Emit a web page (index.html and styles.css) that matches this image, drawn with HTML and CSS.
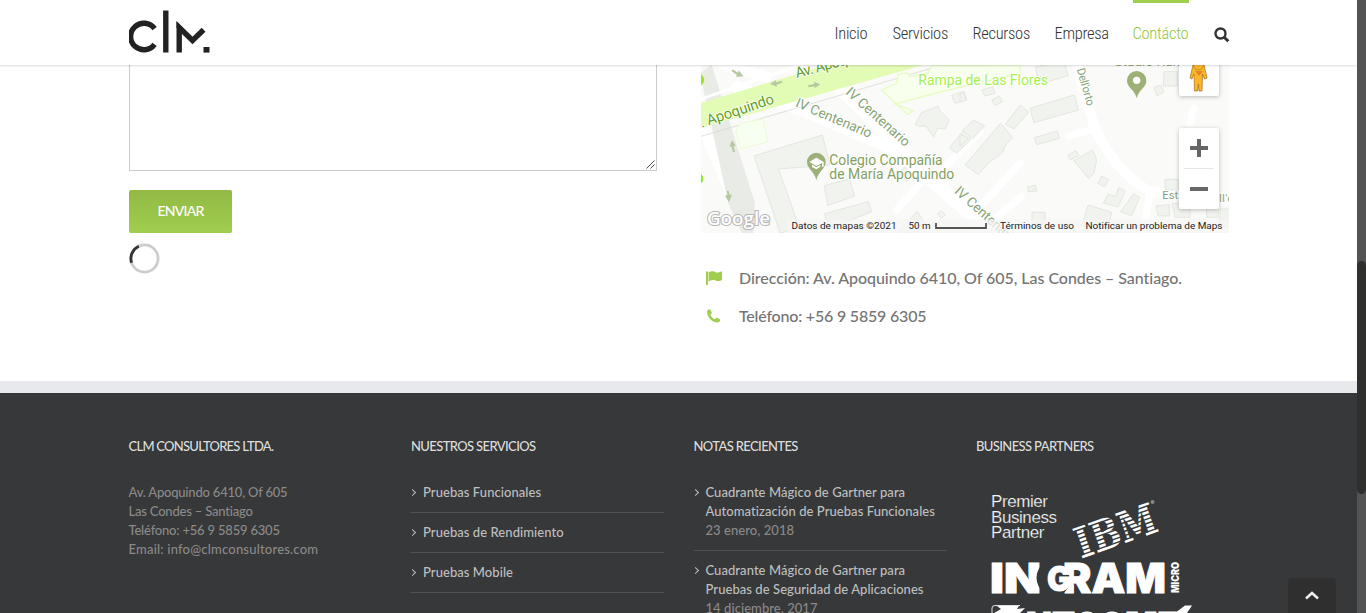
FILE: index.html
```
<!DOCTYPE html>
<html lang="es">
<head>
<meta charset="utf-8">
<title>Contácto - CLM</title>
<link rel="stylesheet" href="styles.css">
</head>
<body>
<div class="window">
<div class="page">
  <header class="header">
    <svg class="logo" width="81" height="44" viewBox="0 0 81 44" fill="none" stroke="#222" stroke-width="5.4">
      <path d="M25.600 18.600A13.300 13.300 0 1 0 25.600 34.400M36.800 0.600V42.600M50.200 42.600V17.500L63.500 30.500L74.600 19.700"/>
      <path d="M47.500 11.500V18L54 18Z" fill="#222" stroke="none"/>
      <path d="M74.500 37h6v5.600h-6z" fill="#222" stroke="none"/>
    </svg>
    <nav class="nav">
      <a class="n1">Inicio</a><a class="n2">Servicios</a><a class="n3">Recursos</a><a class="n4">Empresa</a><a class="n5 active">Contácto</a>
      <svg class="search" width="16" height="16" viewBox="0 0 16 16" fill="none" stroke="#333" stroke-width="2.400"><circle cx="6.500" cy="6.500" r="5"/><path d="M10.200 10.200L14.300 14.300" stroke-width="3"/></svg>
    </nav>
  </header>

  <main class="main">
    <section class="form">
      <div class="textarea"><svg width="9" height="9" viewBox="0 0 9 9" stroke="#555" fill="none"><path d="M0.500 8.500L8.500 .5M4.500 8.500L8.500 4.500"/></svg></div>
      <button class="send">ENVIAR</button>
      <svg class="spinner" width="31" height="31" viewBox="0 0 31 31" fill="none" stroke-width="2.800"><circle cx="15.500" cy="15.500" r="13.600" stroke="#ccc"/><path d="M2.600 19.800A13.600 13.600 0 0 1 9.800 3.200" stroke="#333"/></svg>
    </section>
    <section class="contact">
      <svg class="map" width="528" height="168" viewBox="701 65 528 168">
        <rect x="701" y="65" width="528" height="168" fill="#fafaf8"/>
        <g transform="translate(700 60) scale(.33333)">
          <g stroke="#fff" fill="none" stroke-linecap="round">
            <path d="M-10 160L150 530" stroke-width="34"/>
            <path d="M110 80L340 165L560 260L700 370L850 500" stroke-width="34"/>
            <path d="M420 90L640 300L860 500" stroke-width="34"/>
            <path d="M590 450L670 360M710 345L840 215M850 430L960 310M880 480L965 410" stroke-width="22"/>
            <path d="M70 15L200 50" stroke-width="32"/>
          </g>
          <path d="M0 40L35 15L165 430L160 530H130L85 430Z" fill="#e9ebe6"/>
          <path d="M0 130L380 15H670L0 205Z" fill="#e2fbb5"/>
          <path d="M0 118L300 15" stroke="#fff" stroke-width="9"/>
          <path d="M0 230L710 20" stroke="#d2d5ce" stroke-width="2" fill="none"/>
          <path d="M120 190L190 177L203 246L122 266L107 216Z" fill="#f7fff0" stroke="#ebfbd7" stroke-width="3"/>
          <g fill="#f1f3ef" stroke="#dfe4da" stroke-width="2.500">
            <path d="M162 288L367 225L390 315L235 327L271 426L298 505L240 519L224 470Z"/>
            <path d="M373 377L448 357L464 408L383 437ZM374 461L505 425L515 455L390 505Z"/>
            <path d="M645 193L666 157L714 138L718 150L748 181L735 208L713 204L701 231L678 198L658 199ZM755 106L792 94L800 120L765 130ZM748 263L810 190V240L770 280ZM595 515L652 453L674 490L650 520Z"/>
            <path d="M600 335L615 320L631 352L620 365ZM712 462L724 452L736 464L724 475Z"/>
          </g>
          <path d="M545 90L590 70L594 43L623 38L630 51L684 38L696 16L960 15V40L720 96L585 132L640 152L622 163Z" fill="#f8ffec" stroke="#e6fcc2" stroke-width="4"/>
          <circle cx="-4" cy="60" r="17" fill="#9be52c"/><circle cx="-7" cy="356" r="17" fill="#87ef1b"/>
          <g fill="#b4c99f">
            <path d="M98 28L114 38L116 31L130 49L108 51L111 45L95 34ZM210 72L228 60L228 67L246 62L246 68L229 74L231 80ZM324 76L343 72L341 65L361 73L344 85L344 79L326 82ZM88 261L96 241L108 258L101 257L105 275L99 277L94 259ZM75 407L83 405L80 393L86 392L89 405L96 403L87 427Z"/>
          </g>
          <g class="road" font-size="44">
            <text transform="translate(290 54) rotate(-15)" textLength="182">Av. Apoqu</text>
            <text transform="translate(5 203) rotate(-18.500)" textLength="232">. Apoquindo</text>
          </g>
          <g class="street" font-size="41">
            <text transform="translate(284 139) rotate(23)" textLength="244">IV Centenario</text>
            <text transform="translate(435 100) rotate(42)" textLength="242">IV Centenario</text>
          </g>
          <text class="poi" x="388" y="315" font-size="43" textLength="340" lengthAdjust="spacingAndGlyphs">Colegio Compañía</text>
          <text class="poi" x="388" y="357" font-size="43" textLength="375" lengthAdjust="spacingAndGlyphs">de María Apoquindo</text>
          <path d="M349 361C344 335 321 327 321 306A28 28 0 0 1 377 306C377 327 354 335 349 361Z" fill="#9db078"/>
          <path d="M328 306L349 293L371 306V320H366V309L349 318ZM336 314L349 322L361 315V320L349 328L336 321Z" fill="#fff"/>
        </g>
        <g transform="translate(960 60) scale(.33333)">
          <g stroke="#fff" fill="none" stroke-linecap="round" stroke-linejoin="round">
            <path d="M345 0L400 190C430 270 490 350 570 395L840 420" stroke-width="30"/>
            <path d="M325 228L400 208M690 190L700 145M570 395L550 520" stroke-width="22"/>
          </g>
          <g fill="#f1f3ef" stroke="#dfe4da" stroke-width="2.500">
            <path d="M226 22L310 0L325 47L238 72ZM210 145L343 105L355 150L222 188ZM136 193L180 135L206 156L162 207ZM223 233L292 213L298 235L230 254ZM65 90L98 80L105 100L75 108ZM95 120L118 108L128 124L106 137ZM0 100L12 98L18 120L0 126ZM8 211L40 180L74 197L38 236ZM0 222L24 235L0 260Z"/>
            <path d="M15 315L122 190L158 233L135 258L128 278L84 310L55 344ZM323 285L348 272L357 286L331 300ZM342 302L398 270L410 300L402 340L386 356ZM202 380L226 376L230 393L205 395ZM425 348L445 358L434 381L414 370ZM430 430L445 402L466 410L476 383L496 393L475 440ZM482 455L520 402L539 412L515 467ZM612 35H652V78H610ZM582 82L602 75L612 97L590 107ZM615 358H656V390H615ZM385 435L455 457L440 520L365 495ZM216 457H255V490H216ZM588 438L628 434V468H594ZM636 430H690V472H645ZM740 430H775V472H740ZM780 447H808V500H780Z"/>
          </g>
          <g class="street" font-size="34">
            <text transform="translate(350 28) rotate(74)" textLength="116">Dell'orto</text>
            <text x="607" y="416" textLength="48">Est</text><text x="778" y="425" font-size="31" textLength="42">ll'o</text>
            <text transform="translate(-19 397) rotate(42)" font-size="41" textLength="242">IV Centenario</text>
          </g>
          <text class="park" x="-125" y="76" font-size="42" textLength="389" lengthAdjust="spacingAndGlyphs">Rampa de Las Flores</text>
          <text class="poi" x="463" y="19" font-size="41" textLength="197">Studio Kuh</text>
          <path d="M530 115C525 88 501 84 501 62A29 29 0 0 1 559 62C559 84 535 88 530 115Z" fill="#9db078"/><circle cx="530" cy="61" r="11" fill="#fff"/>
        </g>
        <text class="google" x="707" y="225" font-size="18.500" textLength="63" lengthAdjust="spacingAndGlyphs">Google</text>
        <path d="M787 219.500H1229V233H787Z" fill="#f5f5f5" fill-opacity=".75"/>
        <g class="legal" font-size="9.500">
          <text x="791.500" y="229" textLength="105" lengthAdjust="spacingAndGlyphs">Datos de mapas ©2021</text><text x="908.500" y="229" textLength="22" lengthAdjust="spacingAndGlyphs">50 m</text>
          <text x="1000" y="229" textLength="74" lengthAdjust="spacingAndGlyphs">Términos de uso</text><text x="1085.500" y="229" textLength="137" lengthAdjust="spacingAndGlyphs">Notificar un problema de Maps</text>
        </g>
        <path d="M936 223V228H986V223" fill="none" stroke="#555" stroke-width="1.800"/>
        <g class="control"><rect x="1179" y="50" width="40" height="46" rx="2"/><rect x="1179" y="128" width="40" height="81" rx="2"/></g>
        <path d="M1184 168.500H1214" stroke="#e6e6e6"/>
        <path d="M1190 148H1208M1199 139V157M1190 189H1208" stroke="#666" stroke-width="4"/>
        <path d="M1193 65h11l3 13-2.500 1-2-5-.5 17h-3l-.5-7-1 7h-3l-.5-17-2 5-2-1Z" fill="#fbb72a" stroke="#a66c16" stroke-width=".7"/><path d="M1195 71h8l-4 5Z" fill="#e8822d"/><circle cx="1198.500" cy="65" r="5" fill="#fbb72a" stroke="#a66c16" stroke-width=".6"/>
      </svg>
      <div class="info">
        <svg width="16" height="16" viewBox="0 0 16 16" fill="#a0ce4e"><path d="M0 1.500h2V15H0zM2.500 2.500C6 .6 8 1.500 9.500 2.300S13 2.500 16 1.300V10C13 11.800 11 11 9.500 10.400S6 10 2.500 11.500Z"/></svg>
        <span class="address">Dirección: Av. Apoquindo 6410, Of 605, Las Condes – Santiago.</span>
      </div>
      <div class="info">
        <svg width="16" height="16" viewBox="0 0 16 16" fill="#a0ce4e"><path d="M1 3.500C1.400 2 3 1.200 4.300 1.400L6 5 4.300 6.800C5.200 8.800 6.800 10.300 8.800 11.300L10.800 9.600 14.300 11.500C14.300 13.300 13 14.400 11.300 14.500 6 14.400.8 9 1 3.500Z"/></svg>
        <span class="phone">Teléfono: +56 9 5859 6305</span>
      </div>
    </section>
  </main>

  <footer class="footer">
    <div class="col about"><h4 class="h1">CLM CONSULTORES LTDA.</h4>
      <p><span>Av. Apoquindo 6410, Of 605</span><br><span>Las Condes – Santiago</span><br><span>Teléfono: +56 9 5859 6305</span><br><span class="email">Email: info@clmconsultores.com</span></p>
    </div>
    <div class="col"><h4 class="h2">NUESTROS SERVICIOS</h4>
      <ul><li>Pruebas Funcionales</li><li>Pruebas de Rendimiento</li><li>Pruebas Mobile</li></ul>
    </div>
    <div class="col"><h4 class="h3">NOTAS RECIENTES</h4>
      <ul><li>Cuadrante Mágico de Gartner para<br>Automatización de Pruebas Funcionales<br><small>23 enero, 2018</small></li><li>Cuadrante Mágico de Gartner para<br>Pruebas de Seguridad de Aplicaciones<br><small>14 diciembre, 2017</small></li></ul>
    </div>
    <div class="col"><h4 class="h4">BUSINESS PARTNERS</h4>
      <svg class="partners" width="253" height="130" viewBox="976 483 253 130" fill="#fff">
        <g class="premier" font-size="17"><text x="991" y="507" textLength="57">Premier</text><text x="991" y="522.500" textLength="66">Business</text><text x="991" y="538" textLength="53.500">Partner</text></g>
        <g transform="translate(1083 558) rotate(-19.300)">
          <text class="ibm" x="-2" y="0" font-size="42.500" textLength="84" lengthAdjust="spacingAndGlyphs">IBM</text>
          <path d="M-4-3.300H86M-4-7.400H86M-4-11.500H86M-4-15.600H86M-4-19.700H86M-4-23.800H86M-4-27.900H86" stroke="#363839" stroke-width="1.400"/>
        </g>
        <circle cx="1152.500" cy="502" r="2" fill="#888"/>
        <g class="ingram">
          <text x="990" y="592.500" font-size="41" textLength="51" lengthAdjust="spacingAndGlyphs">IN</text>
          <text x="1063" y="592.500" font-size="41" textLength="103" lengthAdjust="spacingAndGlyphs">RAM</text>
          <path d="M1044 562C1034 572 1034 583 1044 594H1062C1068 591 1070 584 1069 573H1058Z" fill="#363839"/>
          <text x="1047" y="591" font-size="34" textLength="24" lengthAdjust="spacingAndGlyphs">G</text>
          <text class="micro" transform="translate(1179 593) rotate(-90)" font-size="10.500" textLength="31" lengthAdjust="spacingAndGlyphs">MICRO</text>
          <text x="1026" y="642" font-size="41" textLength="152" lengthAdjust="spacingAndGlyphs">NTCOME</text>
        </g>
        <path d="M992 613V608Q992 605.500 995 605.500H1020" fill="none" stroke="#ddd"/><path d="M994 613L1001 609 997 606H1019L1017 609 1025 608 1020 613ZM1175 613L1185 605.500H1192L1187 613Z"/>
      </svg>
    </div>
  </footer>
  <div class="totop"><svg width="14" height="9" viewBox="0 0 14 9" fill="none" stroke="#eee" stroke-width="2.500"><path d="M1 7.500L7 2L13 7.500"/></svg></div>
</div>
<div class="scrollbar"><div class="thumb"></div></div>
</div>
</body>
</html>
```
FILE: styles.css
```
body { margin: 0; background: #fff; font-family: Lato, "Noto Sans", sans-serif; font-weight: 500; font-variant-ligatures: none; }
.window { display: flex; height: 613px; overflow: hidden; }
.page { width: 1357px; height: 613px; overflow: hidden; position: relative; }
.scrollbar { width: 9px; background: #545454; padding-top: 261px; box-sizing: border-box; }
.thumb { height: 233px; border-radius: 5px; background: #2f2f2e; }

.header { position: relative; z-index: 1; box-sizing: border-box; height: 65px; padding: 0 128px 0 129px; display: flex; justify-content: space-between; background: #fff; box-shadow: 0 1px 2px rgba(0,0,0,.15); }
.logo { margin-top: 10px; }
.nav { display: flex; gap: 25px; margin-right: -.5px; font: 300 16.5px/62px "Roboto Condensed", "Liberation Sans Narrow", sans-serif; letter-spacing: -.3px; color: #333; }
.nav a { border-top: 3px solid transparent; height: 62px; white-space: nowrap; }
.nav .active { color: #92c63c; border-color: #a0ce4e; }
.n1 { width: 33px; }
.n2 { width: 55px; }
.n3 { width: 57px; }
.n4 { width: 53px; }
.n5 { width: 56px; }
.search { margin-top: 27px; }

.main { display: flex; gap: 44px; height: 316px; padding-left: 129px; }
.form { width: 528px; display: flex; flex-direction: column; align-items: flex-start; }
.textarea { box-sizing: border-box; width: 528px; height: 106px; border: 1px solid #ccc; border-top: 0; display: flex; align-items: flex-end; justify-content: flex-end; }
.textarea svg { margin: 1px; }
.send { width: 103px; height: 43px; margin-top: 19px; padding: 0 0 2px; border: 0; border-radius: 2px; background: linear-gradient(#92b946, #a0ce4e); color: #fff; font: 500 14px/41px Lato, sans-serif; letter-spacing: -.75px; }
.spinner { margin-top: 9.500px; margin-left: -.5px; }
.contact { width: 528px; color: #747474; }
.map { display: block; margin-bottom: 26px; font-family: Roboto, sans-serif; font-weight: 400; }
.road { fill: #5f9e24; stroke: #fff; stroke-width: 5px; paint-order: stroke; }
.street { fill: #86a375; stroke: #fff; stroke-width: 6px; paint-order: stroke; }
.park { fill: #a5f04b; stroke: #fff; stroke-width: 6px; paint-order: stroke; }
.poi { fill: #84a05f; stroke: #fff; stroke-width: 6px; paint-order: stroke; }
.google { font-family: "Open Sans", sans-serif; font-weight: 600; fill: #fff; stroke: #b5b5b5; stroke-width: 2px; paint-order: stroke; }
.legal { fill: #222; }
.control { fill: #fff; filter: drop-shadow(0 1px 2px rgba(0,0,0,.25)); }
.info { display: flex; align-items: center; gap: 17px; height: 38px; padding-left: 5px; font-size: 16px; white-space: nowrap; }
.info span { padding-bottom: 2px; }
.address { letter-spacing: -.05px; }
.phone { letter-spacing: -.2px; }

.footer { box-sizing: border-box; height: 232px; border-top: 12px solid #e7e9ec; background: #363839; padding: 43px 0 0 128.500px; display: flex; gap: 29.500px; color: #8c8989; font-size: 13px; line-height: 19px; }
.col { width: 253px; flex: none; white-space: nowrap; }
.col h4 { margin: 0 0 27px; padding-top: 1px; font-size: 13px; line-height: 19px; font-weight: 500; letter-spacing: -.62px; color: #ddd; }
.col .h1 { letter-spacing: -.74px; }
.col p { margin: 0; letter-spacing: -.2px; }
.col .email { letter-spacing: .2px; }
.col ul { margin: 0; padding: 0; list-style: none; color: #bfbfbf; letter-spacing: .06px; }
.col li { padding: 10px 0 10px 12px; border-bottom: 1px solid #505152; }
.col li:first-child { padding-top: 0; }
.col li::before { content: ""; float: left; width: 4px; height: 4px; margin: 7px 0 0 -13px; border: solid #bfbfbf; border-width: 1.500px 1.500px 0 0; transform: rotate(45deg); }
.col small { font-size: 13px; color: #8c8989; }
.partners { display: block; }
.premier { font-family: "Liberation Sans", sans-serif; font-weight: 400; fill: #f5f5f5; stroke: #363839; stroke-width: .2px; }
.ibm { font-family: "DejaVu Serif", serif; font-weight: 700; }
.ingram { font-family: Inter, sans-serif; font-weight: 900; stroke: #fff; stroke-width: .9px; }
.ingram path, .ingram .micro { stroke: none; }
.totop { position: absolute; right: 21px; bottom: 0; width: 48px; height: 35px; border-radius: 4px 4px 0 0; background: #2f2f30; display: flex; align-items: center; justify-content: center; }
```
